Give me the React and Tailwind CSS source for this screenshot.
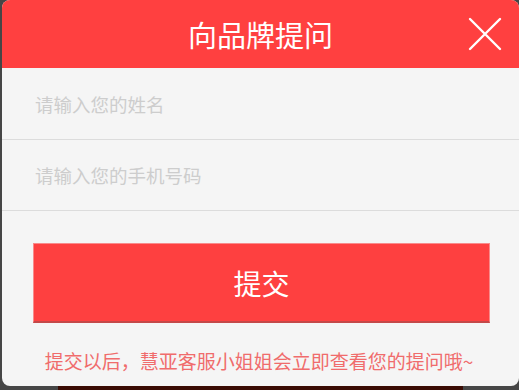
import React from 'react';

const cjk = { fontFamily: '"Noto Sans CJK SC", "Noto Sans", sans-serif' };

export default function App() {
  return (
    <div className="w-[519px] h-[390px] bg-[#464646] overflow-hidden flex flex-col" style={cjk}>
      {/* Modal */}
      <div className="ml-[2px] w-[517px] h-[386px] shrink-0 rounded-[8px] overflow-hidden bg-[#f5f5f5] flex flex-col">
        {/* Header */}
        <div className="relative h-[68px] bg-[#ff4040] flex items-center justify-center">
          <h2 className="text-white text-[29px] leading-none">向品牌提问</h2>
          <button className="absolute right-[17px] top-[17px] w-[34px] h-[34px] flex items-center justify-center">
            <svg width="34" height="34" viewBox="0 0 34 34">
              <path d="M2 2 L32 32 M32 2 L2 32" stroke="#fff" strokeWidth="2.4" strokeLinecap="round" />
            </svg>
          </button>
        </div>

        {/* Inputs */}
        <div className="flex flex-col">
          <input
            type="text"
            placeholder="请输入您的姓名"
            className="h-[72px] px-[33px] bg-transparent border-b border-[#dcdcdc] text-[18.5px] text-[#333] placeholder:text-[#cdcdcd] outline-none"
          />
          <input
            type="text"
            placeholder="请输入您的手机号码"
            className="h-[71px] px-[33px] bg-transparent border-b border-[#dcdcdc] text-[18.5px] text-[#333] placeholder:text-[#cdcdcd] outline-none"
          />
        </div>

        {/* Submit */}
        <div className="pl-[31px] pt-[32px]">
          <button className="w-[457px] h-[80px] bg-[#fe4040] border border-[#f98a8a] border-b-2 border-b-[#c44848] text-white text-[28px] leading-none">
            提交
          </button>
        </div>

        <p className="mt-[28px] pr-[3px] text-center text-[19px] leading-none text-[#f06c6c]">
          提交以后，慧亚客服小姐姐会立即查看您的提问哦~
        </p>
      </div>

      {/* Page content peeking below */}
      <div className="flex-1 flex">
        <div className="ml-[58px] w-[405px] bg-[#3a0c04]" />
      </div>
    </div>
  );
}
